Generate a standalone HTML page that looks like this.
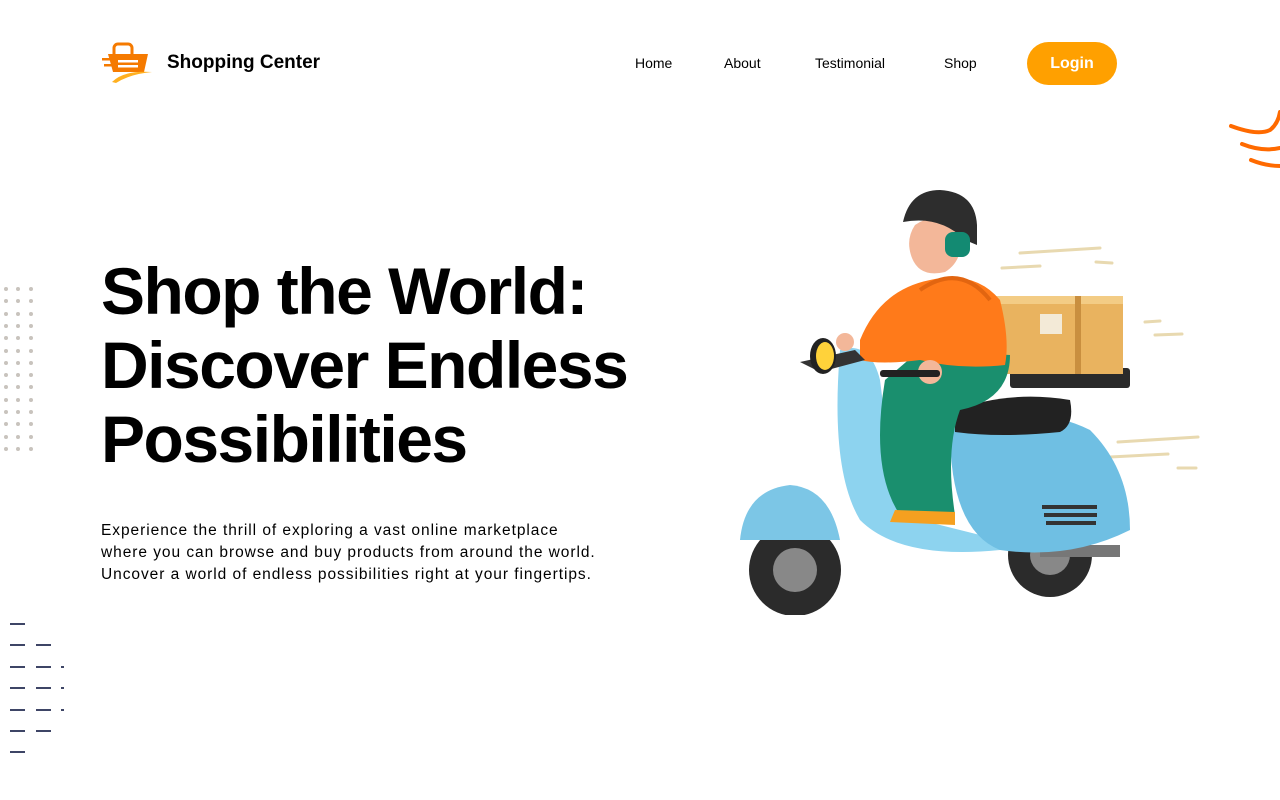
<!DOCTYPE html>
<html><head><meta charset="utf-8"><style>
*{margin:0;padding:0;box-sizing:border-box}
body{width:1280px;height:800px;background:#fff;position:relative;overflow:hidden;font-family:"Liberation Sans",sans-serif;color:#000}
.logo{position:absolute;left:100px;top:42px}
.brand{position:absolute;left:167px;top:52px;font-weight:bold;font-size:19px}
nav a{position:absolute;top:55px;font-size:14px;color:#000;text-decoration:none}
.login{position:absolute;left:1027px;top:42px;width:90px;height:43px;border-radius:22px;background:#ffa000;color:#fff;font-weight:bold;font-size:16px;text-align:center;line-height:43px}
h1{position:absolute;left:101px;top:254px;font-size:66px;line-height:74px;font-weight:900;letter-spacing:-1.5px;white-space:nowrap}
p{position:absolute;left:101px;top:520px;font-size:15.5px;line-height:22px;letter-spacing:.95px;white-space:nowrap}
.dot{position:absolute;width:4px;height:4px;border-radius:50%;background:#c8c3bd}
.dash{position:absolute;height:2px;width:15px;background:#3e4566}
</style></head><body>
<svg class="logo" width="54" height="42" viewBox="0 0 54 42">
<path d="M14 12 V6 a4 4 0 0 1 4-4 h10 a4 4 0 0 1 4 4 V12" fill="none" stroke="#f57a00" stroke-width="3"/>
<path d="M8 12 H48 L44 30 H13 Z" fill="#f57a00"/>
<rect x="18" y="18" width="20" height="2.5" fill="#fff"/><rect x="18" y="23" width="20" height="2.5" fill="#fff"/>
<rect x="2" y="16" width="8" height="2.5" fill="#f57a00"/><rect x="4" y="22" width="8" height="2.5" fill="#f57a00"/>
<path d="M12 40 Q24 28 52 30 Q30 32 16 41 Z" fill="#ffb020"/>
</svg>
<div class="brand">Shopping Center</div>
<nav><a style="left:635px">Home</a><a style="left:724px">About</a><a style="left:815px">Testimonial</a><a style="left:944px">Shop</a></nav>
<div class="login">Login</div>
<svg style="position:absolute;left:1228px;top:108px" width="52" height="64"><g fill="none" stroke="#ff6a00" stroke-width="4" stroke-linecap="round"><path d="M3 18 Q30 28 42 22 Q50 16 52 4"/><path d="M14 36 Q34 44 52 40"/><path d="M23 52 Q38 58 52 58"/></g></svg>
<h1>Shop the World:<br>Discover Endless<br>Possibilities</h1>
<p>Experience the thrill of exploring a vast online marketplace<br>where you can browse and buy products from around the world.<br>Uncover a world of endless possibilities right at your fingertips.</p>
<div id="dots"></div>
<script>
var h='';for(var r=0;r<14;r++)for(var c=0;c<3;c++)h+='<div class="dot" style="left:'+(4+c*12.3)+'px;top:'+(287+r*12.3)+'px"></div>';
var rows=[[1,0,0],[1,1,0],[1,1,1],[1,1,1],[1,1,1],[1,1,0],[1,0,0]];
rows.forEach(function(rw,i){var y=623+i*21.4;if(rw[0])h+='<div class="dash" style="left:10px;top:'+y+'px"></div>';if(rw[1])h+='<div class="dash" style="left:36px;top:'+y+'px"></div>';if(rw[2])h+='<div class="dash" style="left:61px;top:'+y+'px;width:3px"></div>';});
document.getElementById('dots').innerHTML=h;
</script>
<svg style="position:absolute;left:730px;top:185px" width="480" height="430" viewBox="730 185 480 430">
<g stroke="#e8d9b0" stroke-width="3" stroke-linecap="round"><line x1="1020" y1="253" x2="1100" y2="248"/><line x1="1002" y1="268" x2="1040" y2="266"/><line x1="1096" y1="262" x2="1112" y2="263"/><line x1="1145" y1="322" x2="1160" y2="321"/><line x1="1155" y1="335" x2="1182" y2="334"/><line x1="1118" y1="442" x2="1198" y2="437"/><line x1="1110" y1="457" x2="1168" y2="454"/><line x1="1178" y1="468" x2="1196" y2="468"/></g>
<circle cx="795" cy="570" r="46" fill="#2b2b2b"/><circle cx="795" cy="570" r="22" fill="#888"/>
<circle cx="1050" cy="555" r="42" fill="#2b2b2b"/><circle cx="1050" cy="555" r="20" fill="#888"/>
<rect x="1040" y="545" width="80" height="12" fill="#777"/>
<path d="M740 540 Q745 490 790 485 Q830 488 840 540 Z" fill="#7cc6e6"/>
<path d="M840 350 Q870 340 880 380 Q890 470 920 520 Q960 530 1000 540 L1000 550 Q900 560 860 520 Q830 470 840 350 Z" fill="#8dd3ef"/>
<path d="M950 430 Q1030 400 1090 430 Q1130 470 1130 530 Q1070 560 1000 550 Q950 530 950 430 Z" fill="#6fbfe3"/>
<rect x="1010" y="368" width="120" height="20" rx="3" fill="#2a2a2a"/>
<path d="M955 410 Q1010 390 1070 400 Q1075 425 1060 432 Q1000 438 955 432 Z" fill="#222"/>
<g fill="#333"><rect x="1042" y="505" width="55" height="4"/><rect x="1044" y="513" width="53" height="4"/><rect x="1046" y="521" width="50" height="4"/></g>
<rect x="995" y="296" width="128" height="78" fill="#e9b35f"/><rect x="995" y="296" width="128" height="8" fill="#f3cc85"/><rect x="1040" y="314" width="22" height="20" fill="#f3ead7"/><rect x="1075" y="296" width="6" height="78" fill="#c98f3f"/>
<path d="M885 380 Q870 470 900 515 L955 515 Q945 450 960 410 Q1010 400 1010 355 L920 350 Z" fill="#1a8f6e"/>
<path d="M895 510 L955 512 L955 525 L890 522 Z" fill="#f5a020"/>
<path d="M860 340 Q880 290 930 280 Q975 270 1000 300 Q1010 340 1005 365 Q960 370 920 360 Q880 365 860 360 Z" fill="#ff7a1a"/>
<path d="M920 290 Q960 262 990 300" fill="none" stroke="#e26510" stroke-width="4"/>
<circle cx="930" cy="372" r="12" fill="#f3b799"/>
<rect x="880" y="370" width="60" height="7" rx="3" fill="#222"/>
<path d="M800 362 L855 350 L865 360 L820 372 Z" fill="#333"/>
<ellipse cx="823" cy="356" rx="13" ry="18" fill="#222"/><ellipse cx="825" cy="356" rx="9" ry="14" fill="#ffd23a"/>
<circle cx="845" cy="342" r="9" fill="#f3b799"/>
<path d="M915 225 Q935 210 960 230 Q965 260 945 272 Q920 278 912 258 Q905 240 915 225 Z" fill="#f3b799"/>
<path d="M903 222 Q910 190 940 190 Q975 192 977 225 L977 245 L965 240 Q940 215 903 222 Z" fill="#2d2d2d"/>
<rect x="945" y="232" width="25" height="25" rx="8" fill="#138a72"/>
</svg>
</body></html>
